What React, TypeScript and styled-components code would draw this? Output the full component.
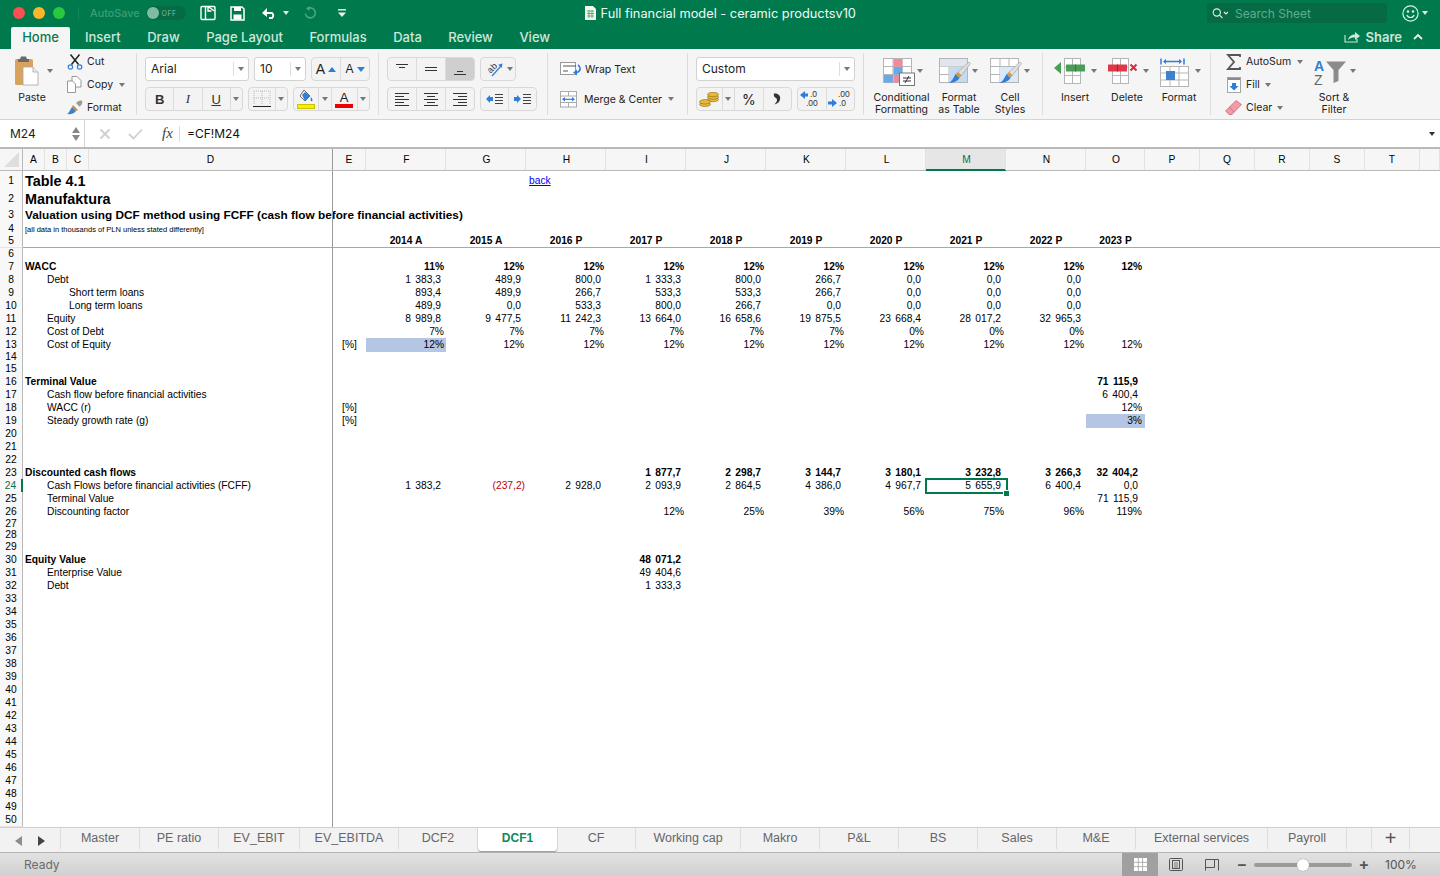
import React from 'react';
import styled, { createGlobalStyle } from 'styled-components';

const GREEN = '#007a4d';
const UI_FONT = 'Inter, "Noto Sans", "Liberation Sans", sans-serif';
const SHEET_FONT = '"Liberation Sans", Arial, sans-serif';
const GRID = '23px 22px 22px 22px 244px 33px repeat(9, 80px) 59px repeat(5, 55px) 1fr';

type RowSpec = {
  h?: number;
  text?: string;
  col?: 'A' | 'B' | 'C';
  kind?: 'h1' | 'h2' | 'note' | 'bold';
  e?: string;
  vals?: (string | null)[];
  bold?: boolean;
  years?: boolean;
  link?: string;
};

const _ = null;
const SPEC: Record<number, RowSpec> = {
  1: { h: 20, text: 'Table 4.1', col: 'A', kind: 'h1', link: 'back' },
  2: { h: 16, text: 'Manufaktura', col: 'A', kind: 'h1' },
  3: { h: 16, text: 'Valuation using DCF method using FCFF (cash flow before financial activities)', col: 'A', kind: 'h2' },
  4: { h: 11, text: '[all data in thousands of PLN unless stated differently]', col: 'A', kind: 'note' },
  5: { h: 13, years: true, bold: true, vals: ['2014 A', '2015 A', '2016 P', '2017 P', '2018 P', '2019 P', '2020 P', '2021 P', '2022 P', '2023 P'] },
  7: { text: 'WACC', col: 'A', kind: 'bold', bold: true, vals: ['11%', '12%', '12%', '12%', '12%', '12%', '12%', '12%', '12%', '12%'] },
  8: { text: 'Debt', col: 'B', vals: ['1 383,3', '489,9', '800,0', '1 333,3', '800,0', '266,7', '0,0', '0,0', '0,0', _] },
  9: { text: 'Short term loans', col: 'C', vals: ['893,4', '489,9', '266,7', '533,3', '533,3', '266,7', '0,0', '0,0', '0,0', _] },
  10: { text: 'Long term loans', col: 'C', vals: ['489,9', '0,0', '533,3', '800,0', '266,7', '0,0', '0,0', '0,0', '0,0', _] },
  11: { text: 'Equity', col: 'B', vals: ['8 989,8', '9 477,5', '11 242,3', '13 664,0', '16 658,6', '19 875,5', '23 668,4', '28 017,2', '32 965,3', _] },
  12: { text: 'Cost of Debt', col: 'B', vals: ['7%', '7%', '7%', '7%', '7%', '7%', '0%', '0%', '0%', _] },
  13: { text: 'Cost of Equity', col: 'B', e: '[%]', vals: ['12%', '12%', '12%', '12%', '12%', '12%', '12%', '12%', '12%', '12%'] },
  14: { h: 11 },
  16: { text: 'Terminal Value', col: 'A', kind: 'bold', vals: [_, _, _, _, _, _, _, _, _, '71 115,9'] },
  17: { text: 'Cash flow before financial activities', col: 'B', vals: [_, _, _, _, _, _, _, _, _, '6 400,4'] },
  18: { text: 'WACC (r)', col: 'B', e: '[%]', vals: [_, _, _, _, _, _, _, _, _, '12%'] },
  19: { text: 'Steady growth rate (g)', col: 'B', e: '[%]', vals: [_, _, _, _, _, _, _, _, _, '3%'] },
  23: { text: 'Discounted cash flows', col: 'A', kind: 'bold', bold: true, vals: [_, _, _, '1 877,7', '2 298,7', '3 144,7', '3 180,1', '3 232,8', '3 266,3', '32 404,2'] },
  24: { text: 'Cash Flows before financial activities (FCFF)', col: 'B', vals: ['1 383,2', '(237,2)', '2 928,0', '2 093,9', '2 864,5', '4 386,0', '4 967,7', '5 655,9', '6 400,4', '0,0'] },
  25: { text: 'Terminal Value', col: 'B', vals: [_, _, _, _, _, _, _, _, _, '71 115,9'] },
  26: { text: 'Discounting factor', col: 'B', vals: [_, _, _, '12%', '25%', '39%', '56%', '75%', '96%', '119%'] },
  27: { h: 11 },
  28: { h: 11 },
  30: { text: 'Equity Value', col: 'A', kind: 'bold', bold: true, vals: [_, _, _, '48 071,2'] },
  31: { text: 'Enterprise Value', col: 'B', vals: [_, _, _, '49 404,6'] },
  32: { text: 'Debt', col: 'B', vals: [_, _, _, '1 333,3'] },
};

const HEADERS = ['A', 'B', 'C', 'D', 'E', 'F', 'G', 'H', 'I', 'J', 'K', 'L', 'M', 'N', 'O', 'P', 'Q', 'R', 'S', 'T', ''];
const VALUE_COLS = ['F', 'G', 'H', 'I', 'J', 'K', 'L', 'M', 'N', 'O'];
const SHEET_TABS: [string, number][] = [
  ['Master', 79], ['PE ratio', 79], ['EV_EBIT', 81], ['EV_EBITDA', 99], ['DCF2', 79], ['DCF1', 79], ['CF', 79],
  ['Working cap', 105], ['Makro', 79], ['P&L', 79], ['BS', 79], ['Sales', 79], ['M&E', 79], ['External services', 132], ['Payroll', 79],
];
const RIBBON_TABS = ['Insert', 'Draw', 'Page Layout', 'Formulas', 'Data', 'Review', 'View'];

const GlobalStyle = createGlobalStyle`
  html, body { margin: 0; padding: 0; height: 100%; overflow: hidden; background: #fff; }
  #root { height: 100%; }
  * { -webkit-font-smoothing: antialiased; }
`;

const Page = styled.div`
  width: 1440px;
  height: 876px;
  display: flex;
  flex-direction: column;
  overflow: hidden;
  font-family: ${UI_FONT};
  color: #222;
`;

/* title bar */
const TitleBar = styled.div`
  height: 26px;
  flex: none;
  display: flex;
  align-items: center;
  background: ${GREEN};
`;
const Lights = styled.div`
  display: flex;
  gap: 8px;
  margin-left: 13px;
  padding-right: 13px;
  border-right: 1px solid #0e8a5c;
`;
const Light = styled.span<{ $c: string }>`
  width: 12px;
  height: 12px;
  border-radius: 50%;
  background: ${(p) => p.$c};
`;
const AutoSave = styled.span`
  margin-left: 11px;
  font-size: 10.8px;
  font-weight: 500;
  color: #3d9c78;
`;
const Toggle = styled.span`
  width: 40px;
  height: 14px;
  margin-left: 6px;
  border-radius: 7px;
  background: #066b45;
  display: flex;
  align-items: center;
  gap: 3px;
  font-size: 7px;
  letter-spacing: 0.5px;
  color: #80bba4;
  &::before {
    content: '';
    width: 12px;
    height: 12px;
    margin-left: 1px;
    border-radius: 50%;
    background: #80bba4;
  }
`;
const QuickIcons = styled.div`
  display: flex;
  align-items: center;
  margin-left: 14px;
  flex: none;
`;
const QuickIcon = styled.span<{ $w: number }>`
  width: ${(p) => p.$w}px;
  display: flex;
  justify-content: center;
`;
const DocTitle = styled.div`
  display: flex;
  align-items: center;
  gap: 5px;
  margin-left: 231px;
  font-size: 12.8px;
  color: #f2f8f5;
`;
const SearchBox = styled.div`
  width: 180px;
  height: 20px;
  margin-left: auto;
  box-sizing: border-box;
  padding-left: 5px;
  display: flex;
  align-items: center;
  gap: 7px;
  border-radius: 3px;
  background: #066a44;
  font-size: 12px;
  color: #5fae90;
`;
const Smiley = styled.span`
  width: 53px;
  display: flex;
  align-items: center;
  justify-content: flex-end;
  gap: 3px;
  padding-right: 12px;
  box-sizing: border-box;
`;

/* ribbon tabs */
const TabRow = styled.div`
  height: 23px;
  flex: none;
  display: flex;
  align-items: flex-end;
  padding-left: 11px;
  background: ${GREEN};
`;
const HomeTab = styled.div`
  width: 59px;
  height: 22px;
  box-sizing: border-box;
  padding-bottom: 2px;
  margin-right: 15px;
  display: flex;
  align-items: center;
  justify-content: center;
  border-radius: 2px 2px 0 0;
  background: #f5f5f5;
  font-size: 13px;
  font-weight: 500;
  color: #0b7a50;
`;
const RibbonTab = styled.div`
  height: 22px;
  box-sizing: border-box;
  padding-bottom: 2px;
  margin-right: 26.5px;
  display: flex;
  align-items: center;
  font-size: 13px;
  font-weight: 500;
  color: #cfe6dc;
`;
const ShareBox = styled.div`
  margin-left: auto;
  height: 22px;
  box-sizing: border-box;
  padding: 0 17px 3px 0;
  display: flex;
  align-items: center;
  gap: 5px;
  font-size: 13px;
  font-weight: 600;
  color: #cfe6dc;
  svg:last-child {
    margin-left: 6px;
  }
`;

/* ribbon */
const Ribbon = styled.div`
  height: 71px;
  flex: none;
  box-sizing: border-box;
  display: flex;
  background: #f5f5f5;
  border-bottom: 1px solid #d4d4d4;
  font-size: 10.5px;
  color: #222;
`;
const Group = styled.div<{ $w: number; $pl: number; $last?: boolean }>`
  flex: none;
  box-sizing: border-box;
  width: ${(p) => p.$w}px;
  height: 62px;
  margin-top: 4px;
  padding-left: ${(p) => p.$pl}px;
  display: flex;
  border-right: ${(p) => (p.$last ? 'none' : '1px solid #dcdcdc')};
`;
const Stack = styled.div`
  display: flex;
  flex-direction: column;
  gap: 6px;
  padding-top: 4px;
`;
const BarRow = styled.div`
  display: flex;
  gap: 5px;
  height: 24px;
`;
const SelectBox = styled.div<{ $w: number }>`
  width: ${(p) => p.$w}px;
  box-sizing: border-box;
  display: flex;
  align-items: center;
  padding: 0 0 1px 5px;
  background: #fff;
  border: 1px solid #d2d2d2;
  border-radius: 3px;
  font-size: 12px;
`;
const SelectValue = styled.span`
  flex: 1;
`;
const SelectArrow = styled.span`
  width: 14px;
  height: 14px;
  display: flex;
  align-items: center;
  justify-content: center;
  border-left: 1px solid #dedede;
`;
const BtnGroup = styled.div<{ $w: number }>`
  width: ${(p) => p.$w}px;
  box-sizing: border-box;
  display: flex;
  overflow: hidden;
  background: #f3f3f3;
  border: 1px solid #d8d8d8;
  border-radius: 4px;
`;
const Btn = styled.div<{ $pressed?: boolean; $flex?: number }>`
  flex: ${(p) => p.$flex ?? 1};
  min-width: 0;
  display: flex;
  align-items: center;
  justify-content: center;
  gap: 3px;
  background: ${(p) => (p.$pressed ? '#cfcfcf' : 'transparent')};
  & + & {
    border-left: 1px solid #dcdcdc;
  }
`;
const Caret = styled.span<{ $tone?: string }>`
  flex: none;
  width: 0;
  height: 0;
  border-left: 3px solid transparent;
  border-right: 3px solid transparent;
  border-top: 4px solid ${(p) => p.$tone ?? '#777'};
`;
const CaretGap = styled(Caret)`
  margin-left: 2px;
`;
const SideCaret = styled(Caret)`
  margin-left: 1px;
`;
const MergeCaret = styled(Caret)`
  margin-left: 3px;
`;
const PasteCaret = styled(Caret)`
  margin: 16px 0 0 -7px;
`;
const ToolList = styled.div<{ $ml: number; $w?: number }>`
  margin: -3px 0 0 ${(p) => p.$ml}px;
  width: ${(p) => (p.$w ? `${p.$w}px` : 'auto')};
  flex: none;
`;
const ToolRow = styled.div`
  height: 23px;
  display: flex;
  align-items: center;
  gap: 4px;
  white-space: nowrap;
`;
const ToolIcon = styled.span`
  width: 17px;
  display: flex;
  justify-content: center;
`;
const WrapRow = styled.div`
  height: 24px;
  display: flex;
  align-items: center;
  gap: 3px;
  white-space: nowrap;
`;
const LargeBtn = styled.div<{ $w: number }>`
  width: ${(p) => p.$w}px;
  flex: none;
  display: flex;
  flex-direction: column;
  align-items: center;
  text-align: center;
  line-height: 12px;
  white-space: pre-line;
`;
const LargeIcon = styled.div`
  flex: none;
  height: 39px;
  padding-top: 5px;
  box-sizing: border-box;
`;
const PasteGlyph = styled(LargeIcon)`
  padding-top: 3px;
  margin-right: 11px;
`;
const FaceA = styled.span<{ $big?: boolean }>`
  font-family: ${SHEET_FONT};
  font-size: ${(p) => (p.$big ? 14 : 12)}px;
`;
const Blue = styled.span<{ $down?: boolean }>`
  width: 0;
  height: 0;
  border-left: 4px solid transparent;
  border-right: 4px solid transparent;
  ${(p) => (p.$down ? 'border-top: 5px solid #2f7ed8;' : 'border-bottom: 5px solid #2f7ed8;')}
`;
const Letter = styled.span<{ $face: 'bold' | 'italic' | 'under' }>`
  font-family: ${(p) => (p.$face === 'italic' ? '"Liberation Serif", serif' : SHEET_FONT)};
  font-size: 13px;
  font-weight: ${(p) => (p.$face === 'bold' ? 700 : 400)};
  font-style: ${(p) => (p.$face === 'italic' ? 'italic' : 'normal')};
  text-decoration: ${(p) => (p.$face === 'under' ? 'underline' : 'none')};
  color: #333;
`;
const ColorA = styled.span`
  display: flex;
  flex-direction: column;
  align-items: center;
  font-family: ${SHEET_FONT};
  font-size: 13px;
  line-height: 13px;
  &::after {
    content: '';
    width: 18px;
    height: 4px;
    background: #ee0000;
  }
`;
const Percent = styled.span`
  font-size: 14px;
`;

/* formula bar */
const FormulaBar = styled.div`
  height: 29px;
  flex: none;
  box-sizing: border-box;
  display: flex;
  align-items: center;
  background: #fff;
  border-bottom: 2px solid #b9b9b9;
`;
const NameBox = styled.div`
  width: 85px;
  height: 100%;
  box-sizing: border-box;
  display: flex;
  align-items: center;
  justify-content: space-between;
  padding: 0 4px 0 10px;
  border-right: 1px solid #d4d4d4;
  font-size: 12px;
`;
const Stepper = styled.span`
  display: flex;
  flex-direction: column;
  gap: 2px;
  &::before,
  &::after {
    content: '';
    border-left: 4px solid transparent;
    border-right: 4px solid transparent;
  }
  &::before {
    border-bottom: 6px solid #888;
  }
  &::after {
    border-top: 6px solid #888;
  }
`;
const BarGlyphs = styled.div`
  display: flex;
  align-items: center;
  width: 95px;
  height: 16px;
  padding-left: 14px;
  gap: 17px;
  box-sizing: border-box;
  border-right: 1px solid #dcdcdc;
`;
const FxMark = styled.span`
  margin-left: 2px;
  font-family: "Liberation Serif", serif;
  font-style: italic;
  font-size: 15px;
  color: #444;
`;
const FormulaText = styled.div`
  margin-left: 7px;
  flex: 1;
  font-size: 12px;
  color: #111;
`;
const BarChevron = styled(Caret)`
  margin-right: 5px;
`;

/* sheet */
const Sheet = styled.div`
  flex: 1;
  min-height: 0;
  overflow: hidden;
  background: #fff;
  font-family: ${SHEET_FONT};
  font-size: 10.25px;
  color: #000;
`;
const ColHeader = styled.div`
  height: 22px;
  box-sizing: border-box;
  display: grid;
  grid-template-columns: ${GRID};
  background: #f6f6f6;
  border-bottom: 1px solid #b9b9b9;
`;
const Corner = styled.div`
  position: relative;
  border-right: 1px solid #b9b9b9;
  &::after {
    content: '';
    position: absolute;
    right: 3px;
    bottom: 3px;
    border-left: 15px solid transparent;
    border-bottom: 15px solid #dedede;
  }
`;
const ColName = styled.div<{ $active?: boolean; $freeze?: boolean; $nudge?: boolean }>`
  display: flex;
  align-items: center;
  justify-content: center;
  box-sizing: border-box;
  padding-left: ${(p) => (p.$nudge ? 2 : 0)}px;
  border-right: 1px solid ${(p) => (p.$freeze ? '#9a9a9a' : '#e2e2e2')};
  background: ${(p) => (p.$active ? '#e6e6e6' : 'transparent')};
  box-shadow: ${(p) => (p.$active ? `inset 0 -1px 0 ${GREEN}, 0 1px 0 ${GREEN}` : 'none')};
  color: ${(p) => (p.$active ? '#0b6e48' : '#000')};
`;
const Row = styled.div<{ $h: number; $line?: boolean }>`
  height: ${(p) => p.$h}px;
  display: grid;
  grid-template-columns: ${GRID};
  line-height: ${(p) => p.$h}px;
  ${(p) => (p.$line ? 'box-shadow: 0 1px 0 #a8a8a8; position: relative; z-index: 1;' : '')}
`;
const RowHead = styled.div<{ $active?: boolean }>`
  box-sizing: border-box;
  text-align: center;
  background: #f8f8f8;
  border-right: ${(p) => (p.$active ? `2px solid ${GREEN}` : '1px solid #b9b9b9')};
  border-bottom: 1px solid #e4e4e4;
  color: ${(p) => (p.$active ? '#0b6e48' : '#000')};
`;
const Cell = styled.div<{
  $freeze?: boolean;
  $align?: 'left' | 'right' | 'center';
  $pad?: number;
  $bold?: boolean;
  $fill?: boolean;
  $red?: boolean;
}>`
  box-sizing: border-box;
  min-width: 0;
  white-space: nowrap;
  text-align: ${(p) => p.$align ?? 'left'};
  padding: ${(p) => (p.$align === 'right' ? `0 ${p.$pad ?? 0}px 0 0` : p.$align === 'center' ? '0' : '0 0 0 2px')};
  word-spacing: ${(p) => (p.$align === 'right' ? '1.5px' : '0')};
  font-weight: ${(p) => (p.$bold ? 700 : 400)};
  color: ${(p) => (p.$red ? '#c00000' : '#000')};
  background: ${(p) => (p.$fill ? '#b4c6e3' : 'transparent')};
  border-right: ${(p) => (p.$freeze ? '1px solid #9a9a9a' : 'none')};
`;
const Selected = styled(Cell)`
  position: relative;
  &::before {
    content: '';
    position: absolute;
    inset: -1px -2px -1px -1px;
    border: 2px solid ${GREEN};
  }
  &::after {
    content: '';
    position: absolute;
    right: -3px;
    bottom: -3px;
    width: 5px;
    height: 5px;
    background: ${GREEN};
    border: 1px solid #fff;
    border-width: 1px 0 0 1px;
  }
`;
const LabelText = styled.span<{ $kind?: RowSpec['kind'] }>`
  font-size: ${(p) => (p.$kind === 'h1' ? 14.4 : p.$kind === 'h2' ? 11.8 : p.$kind === 'note' ? 7.5 : 10.25)}px;
  font-weight: ${(p) => (p.$kind && p.$kind !== 'note' ? 700 : 400)};
`;
const BackLink = styled.a`
  margin-left: 1px;
  color: #0000ee;
  text-decoration: underline;
`;

/* sheet tabs */
const TabsBar = styled.div`
  height: 26px;
  flex: none;
  box-sizing: border-box;
  display: flex;
  background: #f2f2f2;
  border-top: 1px solid #cfcfcf;
  border-bottom: 1px solid #b4b4b4;
  font-size: 12.5px;
  font-family: "Liberation Sans", sans-serif;
  color: #666;
`;
const TabNav = styled.div`
  width: 61px;
  flex: none;
  display: flex;
  align-items: center;
  justify-content: center;
  gap: 16px;
  padding-top: 4px;
  box-sizing: border-box;
  border-right: 1px solid #dcdcdc;
  height: 21px;
`;
const NavArrow = styled.span<{ $left?: boolean }>`
  width: 0;
  height: 0;
  border-top: 5px solid transparent;
  border-bottom: 5px solid transparent;
  ${(p) => (p.$left ? 'border-right: 7px solid #8c8c8c;' : 'border-left: 7px solid #444;')}
`;
const SheetTab = styled.div<{ $w: number; $active?: boolean }>`
  width: ${(p) => p.$w}px;
  flex: none;
  box-sizing: border-box;
  height: ${(p) => (p.$active ? '23px' : '21px')};
  display: flex;
  align-items: center;
  justify-content: center;
  padding-bottom: ${(p) => (p.$active ? '3px' : '1px')};
  ${(p) =>
    p.$active
      ? `background: #fff; color: #0f8a5a; font-weight: 700; font-size: 12px; border-radius: 0 0 3px 3px; box-shadow: 0 1px 1px #999, 1px 0 0 #ddd, -1px 0 0 #ddd;`
      : 'border-right: 1px solid #dcdcdc;'}
`;
const AddTab = styled(SheetTab)`
  font-size: 20px;
  font-weight: 400;
  color: #555;
`;

/* status bar */
const StatusBar = styled.div`
  height: 23px;
  flex: none;
  display: flex;
  align-items: center;
  background: linear-gradient(#e2e2e2, #d0d0d0);
  font-size: 12px;
  color: #6a6a6a;
`;
const Ready = styled.span`
  margin-left: 24px;
  width: 1098px;
  flex: none;
`;
const ViewBtn = styled.span<{ $active?: boolean }>`
  width: 36px;
  height: 23px;
  flex: none;
  display: flex;
  align-items: center;
  justify-content: center;
  background: ${(p) => (p.$active ? '#a0a0a0' : 'transparent')};
`;
const ZoomMark = styled.span`
  width: 14px;
  flex: none;
  margin-left: 5px;
  text-align: center;
  font-size: 16px;
  font-weight: 600;
  color: #555;
  line-height: 23px;
`;
const Slider = styled.div`
  position: relative;
  width: 98px;
  height: 4px;
  margin-left: 5px;
  border-radius: 2px;
  background: #9b9b9b;
  &::after {
    content: '';
    position: absolute;
    left: 43px;
    top: -4px;
    width: 12px;
    height: 12px;
    border-radius: 50%;
    background: #fff;
    box-shadow: 0 0 1px #777;
  }
`;
const ZoomPct = styled.span`
  margin-left: 14px;
  color: #555;
`;

/* icons */
const OpenIcon = () => (
  <svg width="16" height="16" viewBox="0 0 16 16" fill="none" stroke="#fff" strokeWidth="1.4">
    <rect x="1" y="1.5" width="14" height="13" rx="1" />
    <path d="M5.5 1.5v13M8 2v4h3.5M8 1.5l6.5 4.5" />
  </svg>
);
const SaveIcon = () => (
  <svg width="15" height="15" viewBox="0 0 15 15">
    <path d="M1 1h11l2 2v11H1z" fill="none" stroke="#fff" strokeWidth="1.5" />
    <rect x="4" y="1" width="7" height="4" fill="#fff" />
    <rect x="3.5" y="8.5" width="8" height="5" fill="#fff" />
  </svg>
);
const UndoIcon = () => (
  <svg width="16" height="12" viewBox="0 0 16 12" fill="none">
    <path d="M3 6h7a3.2 3.2 0 0 1 0 5H7" stroke="#fff" strokeWidth="2" />
    <path d="M0 6l5-5v9z" fill="#fff" />
  </svg>
);
const RedoIcon = () => (
  <svg width="13" height="14" viewBox="0 0 13 14" fill="none">
    <path d="M4 2.500a5 5 0 1 1-2.600 5" stroke="#4aa483" strokeWidth="1.600" />
    <path d="M5.500 0v5L2 2.500z" fill="#4aa483" />
  </svg>
);
const CustomizeIcon = () => (
  <svg width="10" height="8" viewBox="0 0 10 8">
    <path d="M1 .8h8" stroke="#e8f3ee" strokeWidth="1.400" />
    <path d="M1 3.500h8L5 8z" fill="#e8f3ee" />
  </svg>
);
const SheetDocIcon = () => (
  <svg width="11" height="14" viewBox="0 0 11 14">
    <path d="M0 0h8l3 3v11H0z" fill="#f4f8f4" />
    <path d="M2 5h7M2 7.500h7M2 10h7M4 4v8M7 4v8" stroke="#5fae63" strokeWidth="1" />
  </svg>
);
const SearchIcon = () => (
  <svg width="16" height="11" viewBox="0 0 16 11" fill="none" stroke="#e6f2ed">
    <circle cx="4.800" cy="4.500" r="3.600" strokeWidth="1.100" />
    <path d="M7.500 7.200l3 3M12 4l2 2 2-2" strokeWidth="1.100" />
  </svg>
);
const SmileIcon = () => (
  <svg width="17" height="17" viewBox="0 0 17 17" fill="none" stroke="#dcefe7" strokeWidth="1.200">
    <circle cx="8.500" cy="8.500" r="7.600" />
    <path d="M4.800 10a4 4 0 0 0 7.400 0" />
    <circle cx="6" cy="6.500" r=".7" fill="#dcefe7" />
    <circle cx="11" cy="6.500" r=".7" fill="#dcefe7" />
  </svg>
);
const ShareIcon = () => (
  <svg width="17" height="13" viewBox="0 0 17 13" fill="none">
    <path d="M1 5v7h12V9" stroke="#cfe6dc" strokeWidth="1.100" />
    <path d="M4 10c1-4 4-5.500 7-5.500V2l5 4-5 4V7.500C8 7.500 6 8 4 10z" fill="#cfe6dc" />
  </svg>
);
const CollapseIcon = () => (
  <svg width="10" height="7" viewBox="0 0 10 7" fill="none">
    <path d="M1 6l4-4 4 4" stroke="#e4f1ec" strokeWidth="1.800" />
  </svg>
);
const PasteIcon = () => (
  <svg width="24" height="30" viewBox="0 0 24 30">
    <rect x="0" y="3" width="18" height="26" rx="1.500" fill="#d9a35d" />
    <path d="M5 3l1-2.500h5L12 3h2v3H3V3z" fill="#6a6a6a" />
    <path d="M8 11h10l5 5v13H8z" fill="#fff" stroke="#a5a5a5" strokeWidth=".8" />
    <path d="M18 11v5h5" fill="#eee" stroke="#a5a5a5" strokeWidth=".8" />
  </svg>
);
const CutIcon = () => (
  <svg width="16" height="16" viewBox="0 0 16 16" fill="none">
    <path d="M4.500 10.500L12.500 .5M11.500 10.500L3.500 .5" stroke="#222" strokeWidth="1.500" />
    <circle cx="3.400" cy="13" r="2.200" stroke="#2f7ed8" strokeWidth="1.200" />
    <circle cx="12.600" cy="13" r="2.200" stroke="#2f7ed8" strokeWidth="1.200" />
  </svg>
);
const CopyIcon = () => (
  <svg width="15" height="17" viewBox="0 0 15 17" fill="#fff" stroke="#8c8c8c" strokeWidth=".9">
    <path d="M5 .5h5l4 4V11H5z" />
    <path d="M.5 5h5l3 3v8.500h-8z" />
  </svg>
);
const BrushIcon = () => (
  <svg width="16" height="15" viewBox="0 0 16 15">
    <path d="M9 3l2-1.800 3-1 1.500 1.500-1 3-2 2z" fill="#9a9a9a" />
    <path d="M6 5l5 5-2 1-4-4z" fill="#c58b3c" />
    <path d="M5 7l4 4c-2 3-6 3.500-9 3 2-1 3-4 5-7z" fill="#3b7fd1" />
  </svg>
);
const BorderIcon = () => (
  <svg width="18" height="18" viewBox="0 0 18 18" fill="none">
    <path d="M1 1h16v14M1 1v14M9 1v14M1 8h16" stroke="#aaa" strokeWidth=".8" strokeDasharray="1 1" />
    <path d="M0 16.500h18" stroke="#222" strokeWidth="1.100" />
  </svg>
);
const FillIcon = () => (
  <svg width="18" height="20" viewBox="0 0 18 20">
    <path d="M7 1l6 6-5 5-5-5z" fill="#fff" stroke="#666" />
    <path d="M5 6l3-3 5 4-5 5z" fill="#2f7ed8" />
    <path d="M14 8c1.500 2 2 3 1 4s-2 0-1-4z" fill="#2f7ed8" />
    <rect x=".5" y="15.500" width="17" height="4" fill="#f6f000" stroke="#c9c400" />
  </svg>
);
const LinesIcon = ({ lines, color = '#333' }: { lines: [number, number, number][]; color?: string }) => (
  <svg width="16" height="14" viewBox="0 0 16 14" fill="none" stroke={color} strokeWidth="1">
    {lines.map(([y, a, b]) => (
      <path key={`${y}-${a}`} d={`M${a} ${y + 0.5}H${b}`} />
    ))}
  </svg>
);
const IndentIcon = ({ flip }: { flip?: boolean }) => (
  <svg width="17" height="13" viewBox="0 0 17 13">
    <path d="M9 1.500h8M9 4.500h8M9 7.500h8M9 10.500h8" stroke="#444" strokeWidth="1" fill="none" />
    {flip ? <path d="M0 6l4-4v2h3v4H4v2z" fill="#2f7ed8" /> : <path d="M7 6L3 2v2H0v4h3v2z" fill="#2f7ed8" />}
  </svg>
);
const OrientIcon = () => (
  <svg width="20" height="18" viewBox="0 0 20 18">
    <text x="3" y="11" fontSize="9" fontFamily="Liberation Sans" fill="#333" transform="rotate(-45 8 8)">ab</text>
    <path d="M8 16L17 6" stroke="#2f7ed8" strokeWidth="1.200" />
    <path d="M18.500 3.500l-.8 4.500-3.500-3.200z" fill="#2f7ed8" />
  </svg>
);
const WrapIcon = () => (
  <svg width="22" height="14" viewBox="0 0 22 14" fill="none">
    <rect x=".5" y=".5" width="15" height="12" fill="#fff" stroke="#999" />
    <path d="M3 4h13M3 9h5" stroke="#555" />
    <path d="M18 3c3 2 3 6-1 7.500" stroke="#2f7ed8" strokeWidth="1.600" />
    <path d="M13 10.500l4-3v6z" fill="#2f7ed8" />
  </svg>
);
const MergeIcon = () => (
  <svg width="18" height="17" viewBox="0 0 18 17" fill="none">
    <rect x=".5" y=".5" width="16" height="15.500" fill="#fff" stroke="#aaa" />
    <path d="M.5 5h16M.5 11.500h16M8.500 .5V5M8.500 11.500V16" stroke="#aaa" />
    <path d="M3 8.300h11" stroke="#2f7ed8" strokeWidth="1.200" />
    <path d="M2 8.300l3-2.300v4.600zM15 8.300l-3-2.300v4.600z" fill="#2f7ed8" />
  </svg>
);
const CoinsIcon = () => (
  <svg width="20" height="15" viewBox="0 0 20 15" stroke="#8a6a10" strokeWidth=".6" fill="#e9b93a">
    <ellipse cx="14" cy="7.500" rx="5.500" ry="2.200" />
    <ellipse cx="14" cy="5" rx="5.500" ry="2.200" />
    <ellipse cx="14" cy="2.500" rx="5.500" ry="2.200" />
    <ellipse cx="6" cy="12.300" rx="5.500" ry="2.200" />
    <ellipse cx="6" cy="9.800" rx="5.500" ry="2.200" />
  </svg>
);
const CommaIcon = () => (
  <svg width="8" height="12" viewBox="0 0 8 12">
    <path d="M1 .5c4-.5 7 2 6 6-.5 2.500-2.500 4.500-6 5 2-1.500 3-3 3-4.500C4 5 2.500 5 1.500 4 1 3 .5 1.500 1 .5z" fill="#333" />
  </svg>
);
const DecimalIcon = ({ more }: { more?: boolean }) => (
  <svg width="24" height="18" viewBox="0 0 24 18">
    <path d={more ? 'M0 5l5-4v2.500h3v3H5V9z' : 'M9 13L4 9v2.500H0v3h4V17z'} fill="#2f7ed8" />
    <text x="10" y="7" fontSize="8.500" fontFamily="Liberation Sans" fill="#333">{more ? '.0' : '.00'}</text>
    <text x={more ? 6 : 11} y="16" fontSize="8.500" fontFamily="Liberation Sans" fill="#333">{more ? '.00' : '.0'}</text>
  </svg>
);
const TableBase = ({ x = 4 }: { x?: number }) => (
  <g stroke="#b5b5b5" fill="#fff" strokeWidth="1">
    <rect x={x + 0.5} y="0.500" width="28" height="24" />
    <path d={`M${x + 0.5} 8.500h28M${x + 0.5} 16.500h28M${x + 10} .5v24M${x + 19} .5v24`} fill="none" />
  </g>
);
const LargeCaret = ({ x }: { x: number }) => <path d={`M${x} 11h6l-3 4z`} fill="#777" />;
const CondIcon = () => (
  <svg width="46" height="30" viewBox="0 0 46 30">
    <TableBase />
    <rect x="14.500" y="1" width="9" height="7.500" fill="#ef8a9c" />
    <rect x="14.500" y="9" width="9" height="7.500" fill="#6aa8e8" />
    <rect x="14.500" y="17" width="9" height="7.500" fill="#ef8a9c" />
    <rect x="5" y="17" width="9" height="7.500" fill="#6aa8e8" />
    <rect x="20.500" y="15" width="15" height="12.500" fill="#fff" stroke="#777" />
    <path d="M24 20h8M24 23h8M30 18l-4 7" stroke="#333" fill="none" />
    <LargeCaret x={38} />
  </svg>
);
const BrushOverlay = () => (
  <g>
    <path d="M33 4l1.500 1.500-9 12-3.500-3.500z" fill="#dfdfdf" stroke="#9a9a9a" strokeWidth=".6" />
    <path d="M22 14l3.500 3.500-2 2.500-4-4z" fill="#e09a3e" />
    <path d="M19.500 16l4 4c-2 4-8 5-11 5 3-1 5-5 7-9z" fill="#2f7ed8" />
  </g>
);
const FormatTableIcon = () => (
  <svg width="46" height="30" viewBox="0 0 46 30">
    <TableBase x={3} />
    <rect x="4" y="1" width="27" height="7.500" fill="#dfe6f0" />
    <rect x="13" y="9" width="18" height="15" fill="#c6d9f3" />
    <BrushOverlay />
    <LargeCaret x={36} />
  </svg>
);
const CellStylesIcon = () => (
  <svg width="46" height="30" viewBox="0 0 46 30">
    <TableBase x={3} />
    <rect x="13" y="9" width="18" height="15" fill="#dbe8f8" />
    <BrushOverlay />
    <LargeCaret x={37} />
  </svg>
);
const SmallTable = ({ x, y = 0.5 }: { x: number; y?: number }) => (
  <g stroke="#b5b5b5" fill="#fff">
    <rect x={x} y={y} width="16" height="25" />
    <path d={`M${x} ${y + 8.5}h16M${x} ${y + 17}h16M${x + 8} ${y}v25`} fill="none" />
  </g>
);
const InsertIcon = () => (
  <svg width="46" height="30" viewBox="0 0 46 30">
    <SmallTable x={12.5} />
    <rect x="14" y="6.500" width="19" height="7" rx=".5" fill="#4a9d55" />
    <path d="M23.500 6.500v7" stroke="#2f7a3c" />
    <path d="M2 10l7-6v12z" fill="#4a9d55" />
    <LargeCaret x={39} />
  </svg>
);
const DeleteIcon = () => (
  <svg width="46" height="30" viewBox="0 0 46 30">
    <SmallTable x={8.5} />
    <rect x="4" y="6.500" width="19" height="7" rx=".5" fill="#e0384b" />
    <path d="M13.500 6.500v7" stroke="#a8202f" />
    <path d="M26.500 6.500l6 6M32.500 6.500l-6 6" stroke="#d62c3f" strokeWidth="2" />
    <LargeCaret x={39} />
  </svg>
);
const FormatCellsIcon = () => (
  <svg width="46" height="30" viewBox="0 0 46 30">
    <g stroke="#b5b5b5" fill="#fff">
      <rect x="4.500" y="8.500" width="28" height="20" />
      <path d="M4.500 15h28M4.500 22h28M14 8.500v20M23 8.500v20" fill="none" />
    </g>
    <rect x="10" y="13" width="9" height="9" fill="#3b82d0" />
    <path d="M5 .5v6M28 .5v6" stroke="#2f7ed8" strokeWidth="1.500" />
    <path d="M8 3.500h17" stroke="#2f7ed8" strokeWidth="1.500" />
    <path d="M7 3.500l3-2.500v5zM26 3.500l-3-2.500v5z" fill="#2f7ed8" />
    <LargeCaret x={39} />
  </svg>
);
const SigmaIcon = () => (
  <svg width="15" height="16" viewBox="0 0 15 16" fill="none">
    <path d="M14 3V1H2l6 7-6 7h12v-2" stroke="#555" strokeWidth="1.800" />
  </svg>
);
const FillDownIcon = () => (
  <svg width="14" height="16" viewBox="0 0 14 16">
    <rect x=".5" y=".5" width="13" height="15" fill="#fff" stroke="#a5a5a5" />
    <rect x="1" y="1" width="12" height="2" fill="#8a8a8a" />
    <path d="M5 6h4v3h2.500L7 13.500 2.500 9H5z" fill="#2f7ed8" />
  </svg>
);
const EraserIcon = () => (
  <svg width="17" height="15" viewBox="0 0 17 15">
    <path d="M11 .5l5.500 4L7 14.500H4L.5 11z" fill="#f29aa7" stroke="#c9606f" strokeWidth=".7" />
    <path d="M4 7l5 5" stroke="#c9606f" strokeWidth=".7" />
  </svg>
);
const SortIcon = () => (
  <svg width="46" height="30" viewBox="0 0 46 30">
    <text x="3" y="13" fontSize="14" fontWeight="700" fontFamily="Liberation Sans" fill="#2f7ed8">A</text>
    <text x="3" y="27" fontSize="14" fontFamily="Liberation Sans" fill="#666">Z</text>
    <path d="M15 3.500h20l-7.500 8.500v11l-5 2V12z" fill="#8b8b8b" />
    <LargeCaret x={39} />
  </svg>
);
const CrossIcon = () => (
  <svg width="12" height="12" viewBox="0 0 12 12" fill="none">
    <path d="M1.500 1.500l9 9M10.500 1.500l-9 9" stroke="#cfcfcf" strokeWidth="1.800" />
  </svg>
);
const CheckIcon = () => (
  <svg width="15" height="12" viewBox="0 0 15 12" fill="none">
    <path d="M1 6l4.500 4.500L14 1.500" stroke="#cfcfcf" strokeWidth="1.800" />
  </svg>
);
const GridViewIcon = () => (
  <svg width="13" height="13" viewBox="0 0 13 13" fill="#fff" stroke="#a0a0a0" strokeWidth=".8">
    <rect x="0" y="0" width="13" height="13" stroke="none" />
    <path d="M0 4.300h13M0 8.600h13M4.300 0v13M8.600 0v13" fill="none" />
  </svg>
);
const PageViewIcon = () => (
  <svg width="14" height="13" viewBox="0 0 14 13" fill="none" stroke="#555">
    <rect x=".5" y=".5" width="13" height="12" rx="1" />
    <rect x="3.500" y="2.500" width="7" height="8" />
    <path d="M5 5h4M5 7h4M5 9h4" strokeWidth=".7" />
  </svg>
);
const BreakViewIcon = () => (
  <svg width="14" height="12" viewBox="0 0 14 12" fill="none" stroke="#555">
    <path d="M.5 11.500V.5h13v11M.5 8.500h9V.5" />
  </svg>
);

const VALIGN_TOP: [number, number, number][] = [[2, 2, 14], [5, 5, 11]];
const VALIGN_MID: [number, number, number][] = [[5, 2, 14], [8, 2, 14]];
const VALIGN_BOT: [number, number, number][] = [[9, 5, 11], [12, 2, 14]];
const ALIGN_LEFT: [number, number, number][] = [[1, 1, 15], [4, 1, 10], [7, 1, 15], [10, 1, 10], [13, 1, 15]];
const ALIGN_MID: [number, number, number][] = [[1, 1, 15], [4, 4, 12], [7, 1, 15], [10, 4, 12], [13, 1, 15]];
const ALIGN_RIGHT: [number, number, number][] = [[1, 1, 15], [4, 6, 15], [7, 1, 15], [10, 6, 15], [13, 1, 15]];

const Titlebar = () => (
  <TitleBar>
    <Lights>
      <Light $c="#fc4f4f" />
      <Light $c="#fdb52c" />
      <Light $c="#27c93f" />
    </Lights>
    <AutoSave>AutoSave</AutoSave>
    <Toggle>OFF</Toggle>
    <QuickIcons>
      <QuickIcon $w={16}><OpenIcon /></QuickIcon>
      <QuickIcon $w={44}><SaveIcon /></QuickIcon>
      <QuickIcon $w={20}><UndoIcon /></QuickIcon>
      <QuickIcon $w={12}><Caret $tone="#e0efe9" /></QuickIcon>
      <QuickIcon $w={38}><RedoIcon /></QuickIcon>
      <QuickIcon $w={24}><CustomizeIcon /></QuickIcon>
    </QuickIcons>
    <DocTitle>
      <SheetDocIcon />
      Full financial model - ceramic productsv10
    </DocTitle>
    <SearchBox>
      <SearchIcon />
      Search Sheet
    </SearchBox>
    <Smiley>
      <SmileIcon />
      <Caret $tone="#dcefe7" />
    </Smiley>
  </TitleBar>
);

const RibbonTabs = () => (
  <TabRow>
    <HomeTab>Home</HomeTab>
    {RIBBON_TABS.map((t) => (
      <RibbonTab key={t}>{t}</RibbonTab>
    ))}
    <ShareBox>
      <ShareIcon />
      Share
      <CollapseIcon />
    </ShareBox>
  </TabRow>
);

const RibbonBody = () => (
  <Ribbon>
    <Group $w={137} $pl={10}>
      <LargeBtn $w={44}>
        <PasteGlyph><PasteIcon /></PasteGlyph>
        Paste
      </LargeBtn>
      <PasteCaret />
      <ToolList $ml={13}>
        <ToolRow><ToolIcon><CutIcon /></ToolIcon>Cut</ToolRow>
        <ToolRow><ToolIcon><CopyIcon /></ToolIcon>Copy<CaretGap /></ToolRow>
        <ToolRow><ToolIcon><BrushIcon /></ToolIcon>Format</ToolRow>
      </ToolList>
    </Group>
    <Group $w={242} $pl={8}>
      <Stack>
        <BarRow>
          <SelectBox $w={104}><SelectValue>Arial</SelectValue><SelectArrow><Caret /></SelectArrow></SelectBox>
          <SelectBox $w={52}><SelectValue>10</SelectValue><SelectArrow><Caret /></SelectArrow></SelectBox>
          <BtnGroup $w={59}>
            <Btn><FaceA $big>A</FaceA><Blue /></Btn>
            <Btn><FaceA>A</FaceA><Blue $down /></Btn>
          </BtnGroup>
        </BarRow>
        <BarRow>
          <BtnGroup $w={98}>
            <Btn $flex={29}><Letter $face="bold">B</Letter></Btn>
            <Btn $flex={29}><Letter $face="italic">I</Letter></Btn>
            <Btn $flex={29}><Letter $face="under">U</Letter></Btn>
            <Btn $flex={12}><Caret /></Btn>
          </BtnGroup>
          <BtnGroup $w={40}>
            <Btn $flex={27}><BorderIcon /></Btn>
            <Btn $flex={12}><Caret /></Btn>
          </BtnGroup>
          <BtnGroup $w={77}>
            <Btn $flex={26}><FillIcon /></Btn>
            <Btn $flex={12}><Caret /></Btn>
            <Btn $flex={27}><ColorA>A</ColorA></Btn>
            <Btn $flex={12}><Caret /></Btn>
          </BtnGroup>
        </BarRow>
      </Stack>
    </Group>
    <Group $w={169} $pl={8}>
      <Stack>
        <BarRow>
          <BtnGroup $w={88}>
            <Btn><LinesIcon lines={VALIGN_TOP} /></Btn>
            <Btn><LinesIcon lines={VALIGN_MID} /></Btn>
            <Btn $pressed><LinesIcon lines={VALIGN_BOT} /></Btn>
          </BtnGroup>
          <BtnGroup $w={36}>
            <Btn><OrientIcon /><Caret /></Btn>
          </BtnGroup>
        </BarRow>
        <BarRow>
          <BtnGroup $w={88}>
            <Btn><LinesIcon lines={ALIGN_LEFT} /></Btn>
            <Btn><LinesIcon lines={ALIGN_MID} /></Btn>
            <Btn><LinesIcon lines={ALIGN_RIGHT} /></Btn>
          </BtnGroup>
          <BtnGroup $w={57}>
            <Btn><IndentIcon flip /></Btn>
            <Btn><IndentIcon /></Btn>
          </BtnGroup>
        </BarRow>
      </Stack>
    </Group>
    <Group $w={140} $pl={12}>
      <Stack>
        <WrapRow><WrapIcon />Wrap Text</WrapRow>
        <WrapRow><MergeIcon />&nbsp;Merge &amp; Center<MergeCaret /></WrapRow>
      </Stack>
    </Group>
    <Group $w={176} $pl={8}>
      <Stack>
        <BarRow>
          <SelectBox $w={159}><SelectValue>Custom</SelectValue><SelectArrow><Caret /></SelectArrow></SelectBox>
        </BarRow>
        <BarRow>
          <BtnGroup $w={96}>
            <Btn $flex={26}><CoinsIcon /></Btn>
            <Btn $flex={12}><Caret /></Btn>
            <Btn $flex={29}><Percent>%</Percent></Btn>
            <Btn $flex={29}><CommaIcon /></Btn>
          </BtnGroup>
          <BtnGroup $w={58}>
            <Btn><DecimalIcon more /></Btn>
            <Btn><DecimalIcon /></Btn>
          </BtnGroup>
        </BarRow>
      </Stack>
    </Group>
    <Group $w={179} $pl={9}>
      <LargeBtn $w={57}><LargeIcon><CondIcon /></LargeIcon>{'Conditional\nFormatting'}</LargeBtn>
      <LargeBtn $w={58}><LargeIcon><FormatTableIcon /></LargeIcon>{'Format\nas Table'}</LargeBtn>
      <LargeBtn $w={44}><LargeIcon><CellStylesIcon /></LargeIcon>{'Cell\nStyles'}</LargeBtn>
    </Group>
    <Group $w={168} $pl={6}>
      <LargeBtn $w={52}><LargeIcon><InsertIcon /></LargeIcon>Insert</LargeBtn>
      <LargeBtn $w={52}><LargeIcon><DeleteIcon /></LargeIcon>Delete</LargeBtn>
      <LargeBtn $w={52}><LargeIcon><FormatCellsIcon /></LargeIcon>Format</LargeBtn>
    </Group>
    <Group $w={229} $pl={14} $last>
      <ToolList $ml={0} $w={80}>
        <ToolRow><ToolIcon><SigmaIcon /></ToolIcon>AutoSum<CaretGap /></ToolRow>
        <ToolRow><ToolIcon><FillDownIcon /></ToolIcon>Fill<SideCaret /></ToolRow>
        <ToolRow><ToolIcon><EraserIcon /></ToolIcon>Clear<SideCaret /></ToolRow>
      </ToolList>
      <LargeBtn $w={58}><LargeIcon><SortIcon /></LargeIcon>{'Sort &\nFilter'}</LargeBtn>
    </Group>
  </Ribbon>
);

const Formula = () => (
  <FormulaBar>
    <NameBox>M24<Stepper /></NameBox>
    <BarGlyphs>
      <CrossIcon />
      <CheckIcon />
      <FxMark>fx</FxMark>
    </BarGlyphs>
    <FormulaText>=CF!M24</FormulaText>
    <BarChevron $tone="#333" />
  </FormulaBar>
);

const rowNumbers = Array.from({ length: 50 }, (_v, i) => i + 1);

const ValueCell = ({ n, col, i, spec }: { n: number; col: string; i: number; spec: RowSpec }) => {
  const value = spec.vals?.[i] ?? null;
  if (n === 1 && col === 'H') {
    return <Cell><BackLink href="#back">{spec.link}</BackLink></Cell>;
  }
  if (spec.years) {
    return <Cell $align="center" $bold>{value}</Cell>;
  }
  const pct = !!value && value.endsWith('%');
  const last = col === 'O';
  const paren = !!value && value.startsWith('(');
  const pad = paren ? 1 : pct ? (last ? 3 : 2) : last ? 7 : 5;
  const fill = (n === 13 && col === 'F') || (n === 19 && col === 'O');
  const bold = !!spec.bold || (n === 16 && last);
  if (n === 24 && col === 'M') {
    return <Selected $align="right" $pad={pad}>{value}</Selected>;
  }
  return <Cell $align="right" $pad={pad} $bold={bold} $fill={fill} $red={paren}>{value}</Cell>;
};

const SheetRow = ({ n }: { n: number }) => {
  const spec = SPEC[n] ?? {};
  const label = (col: 'A' | 'B' | 'C') =>
    spec.col === col ? <LabelText $kind={spec.kind}>{spec.text}</LabelText> : null;
  return (
    <Row $h={spec.h ?? 13} $line={n === 5}>
      <RowHead $active={n === 24}>{n}</RowHead>
      <Cell>{label('A')}</Cell>
      <Cell>{label('B')}</Cell>
      <Cell>{label('C')}</Cell>
      <Cell $freeze />
      <Cell $align="center">{spec.e ?? ''}</Cell>
      {VALUE_COLS.map((col, i) => (
        <ValueCell key={col} n={n} col={col} i={i} spec={spec} />
      ))}
    </Row>
  );
};

const Grid = () => (
  <Sheet>
    <ColHeader>
      <Corner />
      {HEADERS.map((h) => (
        <ColName key={h} $active={h === 'M'} $freeze={h === 'D'} $nudge={VALUE_COLS.includes(h)}>{h}</ColName>
      ))}
    </ColHeader>
    {rowNumbers.map((n) => (
      <SheetRow key={n} n={n} />
    ))}
  </Sheet>
);

const Tabs = () => (
  <TabsBar>
    <TabNav>
      <NavArrow $left />
      <NavArrow />
    </TabNav>
    {SHEET_TABS.map(([name, w]) => (
      <SheetTab key={name} $w={w} $active={name === 'DCF1'}>{name}</SheetTab>
    ))}
    <SheetTab $w={25} />
    <AddTab $w={38}>+</AddTab>
  </TabsBar>
);

const Status = () => (
  <StatusBar>
    <Ready>Ready</Ready>
    <ViewBtn $active><GridViewIcon /></ViewBtn>
    <ViewBtn><PageViewIcon /></ViewBtn>
    <ViewBtn><BreakViewIcon /></ViewBtn>
    <ZoomMark>−</ZoomMark>
    <Slider />
    <ZoomMark>+</ZoomMark>
    <ZoomPct>100%</ZoomPct>
  </StatusBar>
);

export default function App() {
  return (
    <Page>
      <GlobalStyle />
      <Titlebar />
      <RibbonTabs />
      <RibbonBody />
      <Formula />
      <Grid />
      <Tabs />
      <Status />
    </Page>
  );
}
